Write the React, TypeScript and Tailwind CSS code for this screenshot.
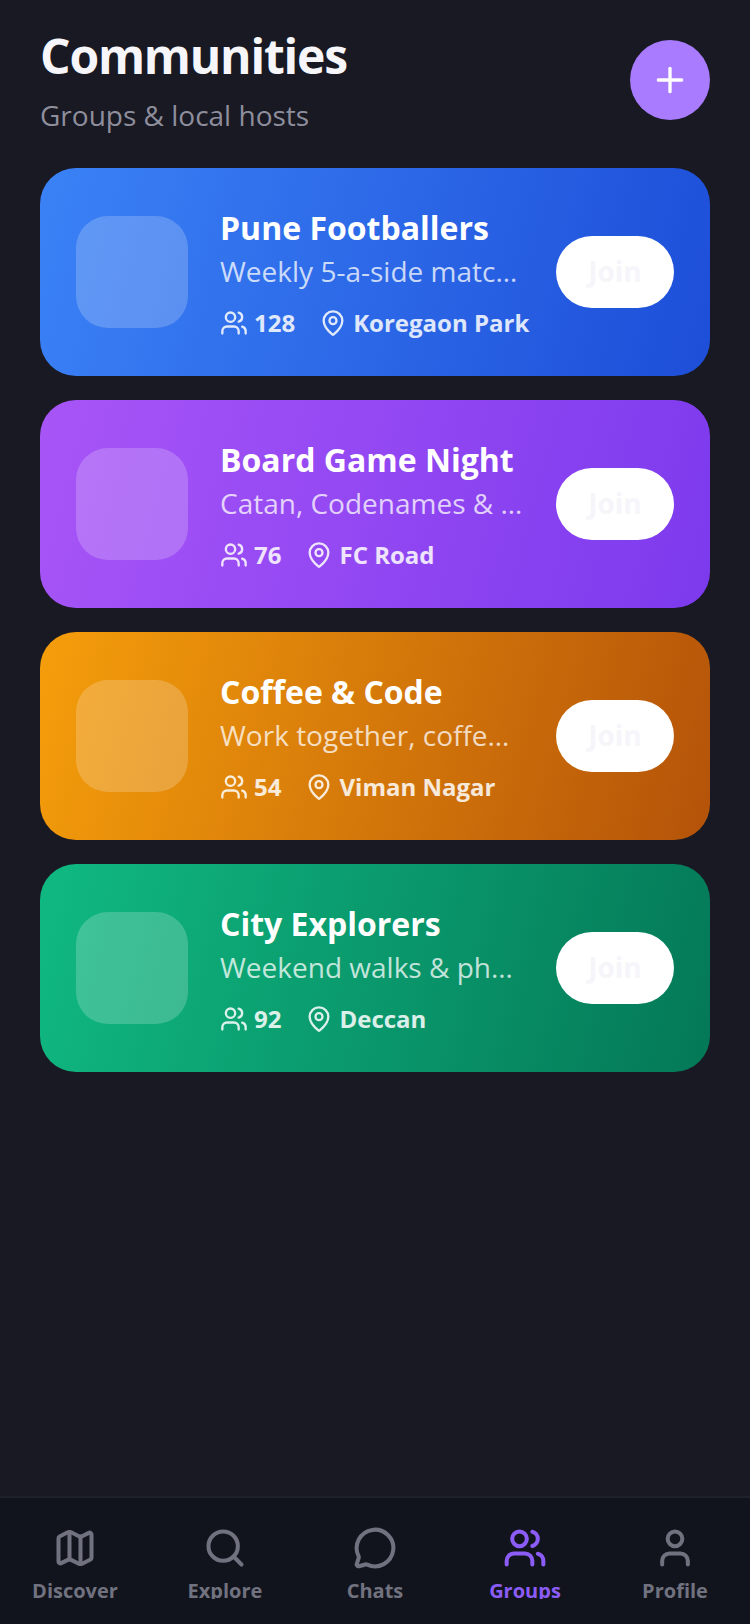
import { MapIcon, Search, MessageCircle, Users, User, MapPin, Plus } from 'lucide-react';

const groups = [
  { name: 'Pune Footballers', desc: 'Weekly 5-a-side matches at the turf', members: '128', place: 'Koregaon Park', bg: 'bg-[linear-gradient(105deg,#3b82f6,#1d4ed8)]' },
  { name: 'Board Game Night', desc: 'Catan, Codenames & more every Friday', members: '76', place: 'FC Road', bg: 'bg-[linear-gradient(105deg,#a855f7,#7c3aed)]' },
  { name: 'Coffee & Code', desc: 'Work together, coffee included', members: '54', place: 'Viman Nagar', bg: 'bg-[linear-gradient(105deg,#f59e0b,#b45309)]' },
  { name: 'City Explorers', desc: 'Weekend walks & photo trails', members: '92', place: 'Deccan', bg: 'bg-[linear-gradient(105deg,#10b981,#047857)]' },
];

const tabs = [
  { label: 'Discover', icon: MapIcon },
  { label: 'Explore', icon: Search },
  { label: 'Chats', icon: MessageCircle },
  { label: 'Groups', icon: Users, active: true },
  { label: 'Profile', icon: User },
];

const App = () => {
  return (
    <div className="w-[750px] h-[1624px] bg-[#181923] flex flex-col overflow-hidden font-['Open_Sans',sans-serif]">
      <div className="flex-1 px-10">
        {/* Header */}
        <div className="flex items-start justify-between pt-[24px] h-[168px]">
          <div>
            <h1 className="text-[48px] leading-[64px] font-bold tracking-[-1.2px] text-[#f5f5fa]">Communities</h1>
            <p className="text-[28px] leading-[38px] mt-[8px] text-[#8e8e9c]">Groups &amp; local hosts</p>
          </div>
          <button className="w-20 h-20 mt-4 rounded-full bg-[#a87bff] flex items-center justify-center text-white">
            <Plus size={40} strokeWidth={2} />
          </button>
        </div>

        {/* Cards */}
        <div className="flex flex-col gap-6">
          {groups.map((g) => (
            <div key={g.name} className={`h-[208px] rounded-[36px] px-9 flex items-center ${g.bg}`}>
              <div className="w-[112px] h-[112px] rounded-[32px] bg-white/20 shrink-0" />
              <div className="ml-8 w-[312px] shrink-0 min-w-0">
                <div className="text-[32px] leading-[46px] font-bold text-white truncate">{g.name}</div>
                <div className="text-[28px] leading-[38px] mt-[1px] pr-2 text-white/75 truncate">{g.desc}</div>
                <div className="flex items-center mt-[17px] text-[24px] leading-[32px] font-bold text-white/85 whitespace-nowrap">
                  <Users size={28} strokeWidth={2} className="mr-1.5" />
                  <span>{g.members}</span>
                  <MapPin size={28} strokeWidth={2} className="ml-6 mr-1.5" />
                  <span>{g.place}</span>
                </div>
              </div>
              <button className="ml-auto w-[118px] h-[72px] pb-[2px] rounded-full bg-white text-[28px] font-bold text-[#f5f5fa]">Join</button>
            </div>
          ))}
        </div>
      </div>

      {/* Tab bar */}
      <div className="h-[128px] shrink-0 bg-[#12141d] border-t-2 border-[#1e202c] flex items-start pt-[28px]">
        {tabs.map((t) => {
          const Icon = t.icon;
          return (
            <div key={t.label} className={`w-[150px] flex flex-col items-center ${t.active ? 'text-[#8b5cf6]' : 'text-[#71727f]'}`}>
              <Icon size={44} strokeWidth={2.2} />
              <div className="h-[22px] mt-[7px] overflow-hidden text-[20px] leading-[28px] font-bold">{t.label}</div>
            </div>
          );
        })}
      </div>
    </div>
  );
};

export default App;
